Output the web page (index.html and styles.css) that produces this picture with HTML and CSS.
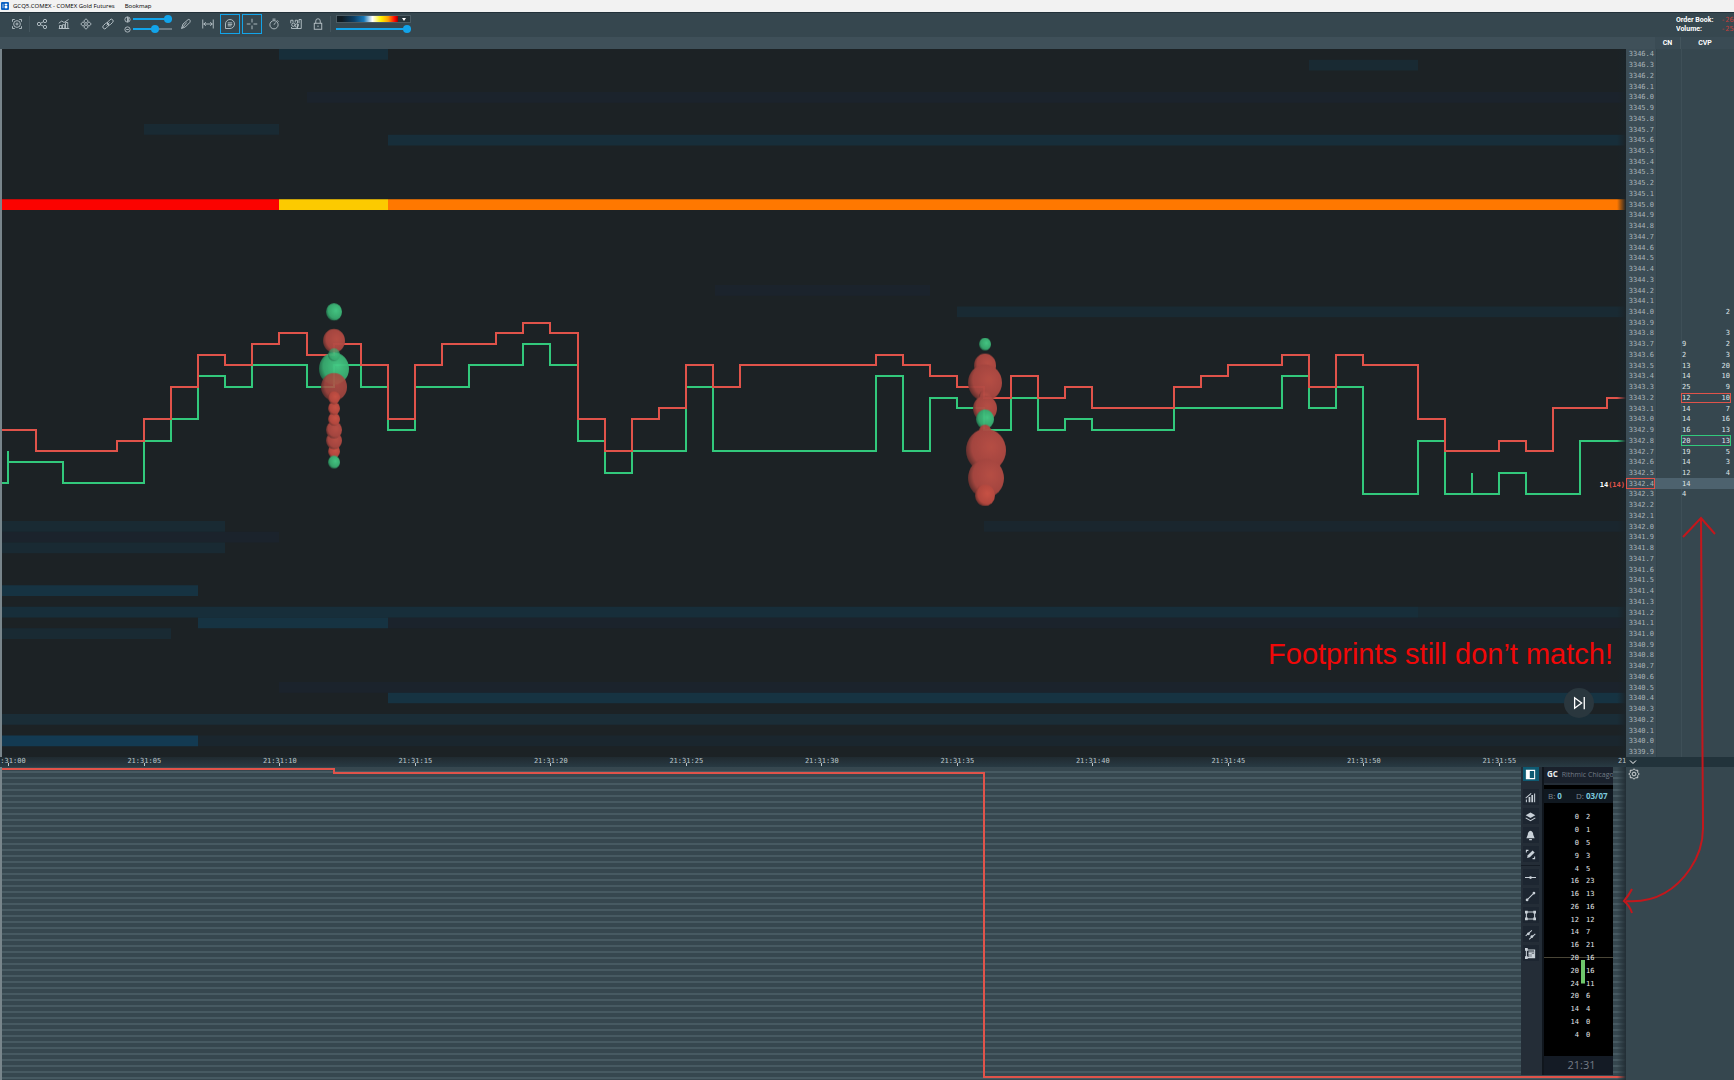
FILE: index.html
```html
<!DOCTYPE html>
<html lang="en">
<head>
<meta charset="utf-8">
<title>GCQ5.COMEX - COMEX Gold Futures</title>
<link rel="stylesheet" href="styles.css">
</head>
<body>
<header class="titlebar">
  <svg class="app-icon" viewBox="0 0 8 8"><rect width="8" height="8" rx="1" fill="#0b62c4"/><path d="M2 2v4M4 2h2v1H4zM4 4h2v2H4z" stroke="#fff" fill="#fff" stroke-width=".6"/></svg>
  <span class="title">GCQ5.COMEX - COMEX Gold Futures</span>
  <span>Bookmap</span>
</header>

<div class="toolbar">
  <button class="tool" aria-label="Fit view"><svg viewBox="0 0 16 16"><path d="M2 5V2h3M11 2h3v3M14 11v3h-3M5 14H2v-3M8 6v4M6 8h4"/><circle cx="8" cy="8" r="4.5"/></svg></button>
  <i class="sep"></i>
  <button class="tool" aria-label="Share"><svg viewBox="0 0 16 16"><circle cx="4" cy="8" r="2.2"/><circle cx="12" cy="4" r="2.2"/><circle cx="12" cy="12" r="2.2"/><path d="M6 7l4-2M6 9l4 2"/></svg></button>
  <button class="tool" aria-label="Indicators"><svg viewBox="0 0 16 16"><path d="M1 7l4-3 3 2 6-4M2 14v-4h3v4zM6 14V9h3v5zM10 14V6h3v8zM1 14h14"/></svg></button>
  <button class="tool" aria-label="Move"><svg viewBox="0 0 16 16"><path d="M8 1l3 3-3 3-3-3zM8 9l3 3-3 3-3-3zM4 5l3 3-3 3-3-3zM12 5l3 3-3 3-3-3z"/></svg></button>
  <button class="tool" aria-label="Link charts"><svg viewBox="0 0 16 16"><rect x="6.500" y="3" width="9" height="5" rx="2.500" transform="rotate(-45 11 5.500)"/><rect x=".5" y="8" width="9" height="5" rx="2.500" transform="rotate(-45 5 10.500)"/><path d="M6 10l4-4"/></svg></button>
  <div class="levels">
    <label><svg viewBox="0 0 8 8"><circle cx="4" cy="4" r="3"/><path d="M4 1v6M5 2v4" /></svg><input type="range" class="range full" value="100" aria-label="Contrast"></label>
    <label><svg viewBox="0 0 8 8"><circle cx="4" cy="4" r="3"/><path d="M2.500 4h3"/></svg><input type="range" class="range mid" value="59" aria-label="Bubble size"></label>
  </div>
  <button class="tool" aria-label="Draw"><svg viewBox="0 0 16 16"><path d="M2 14l2-6 7-6q4 0 2 4l-6 6-5 2M3 13l6-7"/></svg></button>
  <button class="tool" aria-label="Measure"><svg viewBox="0 0 16 16"><path d="M1 2v12M15 2v12M2 8h12M5 5.500L2.500 8 5 10.500M11 5.500L13.500 8 11 10.500"/></svg></button>
  <button class="tool on" aria-label="Comments"><svg viewBox="0 0 16 16"><path d="M2 14V8a6 6 0 1 1 6 6zM5 6.500h6M5 8.500h6M5 10.500h5"/></svg></button>
  <button class="tool on" aria-label="Crosshair"><svg viewBox="0 0 16 16"><path d="M8 1v5M8 10v5M1 8h5M10 8h5"/></svg></button>
  <button class="tool" aria-label="Timer"><svg viewBox="0 0 16 16"><circle cx="8" cy="9" r="5.500"/><path d="M8 9l2-3M6 1.500h4M12 3l2 2"/></svg></button>
  <button class="tool" aria-label="Statistics"><svg viewBox="0 0 16 16"><path d="M1 7V3h3v3M7 6V3h3v4M12 7V2h3v12H2v-2M10 14V9h2"/><circle cx="4.500" cy="9" r="2.200"/><circle cx="9" cy="10" r="2.200"/></svg></button>
  <button class="tool" aria-label="Lock"><svg viewBox="0 0 16 16"><rect x="3" y="7" width="10" height="8"/><path d="M5 7V4a3 3 0 0 1 6 0v3M8 10v2"/></svg></button>
  <i class="sep"></i>
  <div class="palette">
    <button class="swatch" aria-label="Heatmap colours"><i class="ramp"></i><svg class="caret" viewBox="0 0 12 6"><path d="M4 2h4L6 5z"/></svg></button>
    <input type="range" class="range full" value="100" aria-label="Heatmap limit">
  </div>
  <dl class="balance">
    <dt>Order Book:</dt><dd>-26%</dd>
    <dt>Volume:</dt><dd>-25%</dd>
  </dl>
</div>

<div class="columns-head"><span></span><span class="cn">CN</span><span class="cvp">CVP</span></div>

<main class="workspace">
  <section class="heatmap">
    <svg class="plot" viewBox="2 0 1624 660" preserveAspectRatio="none">
      <defs>
        <radialGradient id="red" cx=".62" cy=".42" r=".68"><stop offset="0" stop-color="#bd5147"/><stop offset=".7" stop-color="#aa4841"/><stop offset="1" stop-color="#522b2a"/></radialGradient>
        <radialGradient id="hot" cx=".62" cy=".42" r=".68"><stop offset="0" stop-color="#cf5446"/><stop offset=".7" stop-color="#b94a40"/><stop offset="1" stop-color="#5b2c29"/></radialGradient>
        <radialGradient id="green" cx=".62" cy=".42" r=".68"><stop offset="0" stop-color="#46cc87"/><stop offset=".7" stop-color="#38aa6f"/><stop offset="1" stop-color="#1d5a40"/></radialGradient>
      </defs>
      <!-- resting liquidity, one band per tick -->
      <g fill="#1b232c">
        <path d="M307 40h1319v10H307zM715 220h215v10H715zM0 450h279v10H0zM388 530h1238v10H388zM279 590h1347v10H279z"/>
      </g>
      <g fill="#192a33">
        <path d="M1309 10h109v10h-109zM144 70h135v10H144zM957 240h669v10H957zM0 440h225v10H0zM0 460h225v10H0zM1418 520h208v10h-208zM0 540h171v10H0z"/>
      </g>
      <path fill="#1a262e" d="M984 440h642v10H984zM198 640h1428v10H198z"/>
      <path fill="#1a2d37" d="M0 620h1626v10H0z"/>
      <path fill="#172e3a" d="M279 0h109v10H279zM388 80h1238v10H388zM0 520h1418v10H0z"/>
      <path fill="#163342" d="M0 500h198v10H0zM198 530h190v10H198zM388 600h1238v10H388z"/>
      <path fill="#133a52" d="M0 640h198v10H0z"/>
      <path fill="#fb0300" d="M0 140h279v10H0z"/>
      <path fill="#fcca00" d="M279 140h109v10H279z"/>
      <path fill="#ff7800" d="M388 140h1238v10H388z"/>
      <!-- best bid -->
      <path class="line bid" d="M0 405H8V375V385H63V405H144V365H171V345H198V305H225V315H252V295H307V315H334V295H361V315H388V355H415V315H469V295H523V275H550V295H578V365H605V395H632V375H686V315H713V375H876V305H903V375H930V325H957V335H984V355H1011V325H1038V355H1065V345H1092V355H1174V335H1282V305H1309V335H1336V315H1363V415H1418V365H1445V415H1472V395V415H1499V395H1526V415H1580V365H1626"/>
      <!-- best ask -->
      <path class="line ask" d="M0 355H36V375H117V365H144V345H171V315H198V285H225V295H252V275H279V265H307V285H334V275H361V295H388V345H415V295H442V275H496V265H523V255H550V265H578V345H605V375H632V345H659V335H686V295H713V315H740V295H876V285H903V295H930V305H957V315H984V325H1011V305H1038V325H1065V315H1092V335H1174V315H1201V305H1228V295H1282V285H1309V315H1336V285H1363V295H1418V345H1445V375H1499V365H1526V375H1553V335H1607V325H1626"/>
      <!-- traded volume bubbles -->
      <g opacity=".96">
        <circle cx="334" cy="245" r="8" fill="url(#green)"/>
        <circle cx="334" cy="272" r="11" fill="url(#red)"/>
        <circle cx="334" cy="298" r="15" fill="url(#green)"/>
        <circle cx="334" cy="285" r="6" fill="url(#green)" opacity=".7"/>
        <circle cx="334" cy="315" r="13" fill="url(#red)" opacity=".9"/>
        <circle cx="334" cy="375" r="6" fill="url(#hot)"/>
        <circle cx="334" cy="365" r="8" fill="url(#red)"/>
        <circle cx="334" cy="355" r="8" fill="url(#red)"/>
        <circle cx="334" cy="345" r="6" fill="url(#hot)"/>
        <circle cx="334" cy="335" r="6" fill="url(#hot)"/>
        <circle cx="334" cy="325" r="6" fill="url(#hot)"/>
        <circle cx="334" cy="385" r="6" fill="url(#green)"/>
        <circle cx="985" cy="275" r="6" fill="url(#green)"/>
        <circle cx="985" cy="295" r="11" fill="url(#red)"/>
        <circle cx="985" cy="311" r="17" fill="url(#red)"/>
        <circle cx="985" cy="324" r="6" fill="url(#red)"/>
        <circle cx="985" cy="335" r="12" fill="url(#red)"/>
        <circle cx="985" cy="345" r="9" fill="url(#green)"/>
        <circle cx="985" cy="356" r="6" fill="url(#red)"/>
        <circle cx="986" cy="374" r="20" fill="url(#red)"/>
        <circle cx="986" cy="400" r="18" fill="url(#red)"/>
        <circle cx="985" cy="416" r="10" fill="url(#hot)"/>
      </g>
    </svg>
    <div class="edge-fade"></div>
    <p class="last-size">14<b>(14)</b></p>
    <p class="note">Footprints still don’t match!</p>
    <button class="jump" aria-label="Jump to latest"><svg viewBox="0 0 16 16"><path d="M3 2v12l8-6zM14 1v14"/></svg></button>
  </section>

  <table class="ladder" aria-label="Price ladder"><tbody>
    <tr><th>3346.4</th></tr><tr><th>3346.3</th></tr><tr><th>3346.2</th></tr><tr><th>3346.1</th></tr><tr><th>3346.0</th></tr>
    <tr><th>3345.9</th></tr><tr><th>3345.8</th></tr><tr><th>3345.7</th></tr><tr><th>3345.6</th></tr><tr><th>3345.5</th></tr>
    <tr><th>3345.4</th></tr><tr><th>3345.3</th></tr><tr><th>3345.2</th></tr><tr><th>3345.1</th></tr><tr><th>3345.0</th></tr>
    <tr><th>3344.9</th></tr><tr><th>3344.8</th></tr><tr><th>3344.7</th></tr><tr><th>3344.6</th></tr><tr><th>3344.5</th></tr>
    <tr><th>3344.4</th></tr><tr><th>3344.3</th></tr><tr><th>3344.2</th></tr><tr><th>3344.1</th></tr>
    <tr><th>3344.0</th><td></td><td>2</td></tr>
    <tr><th>3343.9</th></tr>
    <tr><th>3343.8</th><td></td><td>3</td></tr>
    <tr><th>3343.7</th><td>9</td><td>2</td></tr>
    <tr><th>3343.6</th><td>2</td><td>3</td></tr>
    <tr><th>3343.5</th><td>13</td><td>20</td></tr>
    <tr><th>3343.4</th><td>14</td><td>10</td></tr>
    <tr><th>3343.3</th><td>25</td><td>9</td></tr>
    <tr class="best-ask"><th>3343.2</th><td>12</td><td>10</td></tr>
    <tr><th>3343.1</th><td>14</td><td>7</td></tr>
    <tr><th>3343.0</th><td>14</td><td>16</td></tr>
    <tr><th>3342.9</th><td>16</td><td>13</td></tr>
    <tr class="best-bid"><th>3342.8</th><td>20</td><td>13</td></tr>
    <tr><th>3342.7</th><td>19</td><td>5</td></tr>
    <tr><th>3342.6</th><td>14</td><td>3</td></tr>
    <tr><th>3342.5</th><td>12</td><td>4</td></tr>
    <tr class="cursor"><th>3342.4</th><td>14</td><td></td></tr>
    <tr><th>3342.3</th><td>4</td><td></td></tr>
    <tr><th>3342.2</th></tr><tr><th>3342.1</th></tr><tr><th>3342.0</th></tr>
    <tr><th>3341.9</th></tr><tr><th>3341.8</th></tr><tr><th>3341.7</th></tr><tr><th>3341.6</th></tr><tr><th>3341.5</th></tr>
    <tr><th>3341.4</th></tr><tr><th>3341.3</th></tr><tr><th>3341.2</th></tr><tr><th>3341.1</th></tr><tr><th>3341.0</th></tr>
    <tr><th>3340.9</th></tr><tr><th>3340.8</th></tr><tr><th>3340.7</th></tr><tr><th>3340.6</th></tr><tr><th>3340.5</th></tr>
    <tr><th>3340.4</th></tr><tr><th>3340.3</th></tr><tr><th>3340.2</th></tr><tr><th>3340.1</th></tr><tr><th>3340.0</th></tr>
    <tr><th>3339.9</th></tr>
  </tbody></table>

  <div class="time-axis"><div class="ticks">
    <span>21:31:00</span><span>21:31:05</span><span>21:31:10</span><span>21:31:15</span><span>21:31:20</span><span>21:31:25</span><span>21:31:30</span><span>21:31:35</span><span>21:31:40</span><span>21:31:45</span><span>21:31:50</span><span>21:31:55</span><span>21:32:00</span>
  </div></div>
  <button class="collapse" aria-label="Collapse indicator pane"><svg viewBox="0 0 8 8"><path d="M1 2.500l3 3 3-3"/></svg></button>

  <section class="indicator">
    <svg class="plot" viewBox="2 0 1624 313" preserveAspectRatio="none"><path class="line cvd" d="M0 2H334V6H984V310H1626"/></svg>
    <div class="edge-fade soft"></div>
    <aside class="footprint">
      <nav class="rail">
        <button class="on" aria-label="Panels"><svg viewBox="0 0 16 16"><path d="M2 2h12v12H2z"/><path class="solid" d="M2 2h5v12H2z"/></svg></button>
        <button class="first" aria-label="Bars"><svg viewBox="0 0 16 16"><path d="M2 15v-4M6 15V8h1v7M10 15V5h1v10M14 15V2M1 9l8-7"/></svg></button>
        <button aria-label="Layers"><svg viewBox="0 0 16 16"><path class="solid" d="M8 2l7 4-7 4-7-4z"/><path d="M1 10l7 4 7-4"/></svg></button>
        <button aria-label="Alerts"><svg viewBox="0 0 16 16"><path class="solid" d="M8 1q4 1 4 6l2 5H2l2-5q0-5 4-6zM6 13h4v2H6z"/></svg></button>
        <button aria-label="Drawing tools"><svg viewBox="0 0 16 16"><path d="M2 5V2h3M14 11v3h-3"/><path class="solid" d="M3 13l1-4 7-7 3 3-7 7z"/></svg></button>
        <hr>
        <button aria-label="Horizontal line"><svg viewBox="0 0 16 16"><path d="M0 8h16"/><circle class="solid" cx="8" cy="8" r="2"/></svg></button>
        <button aria-label="Trend line"><svg viewBox="0 0 16 16"><path d="M3 13L13 3"/><circle class="solid" cx="3" cy="13" r="2"/><circle class="solid" cx="13" cy="3" r="2"/></svg></button>
        <button aria-label="Rectangle"><svg viewBox="0 0 16 16"><path d="M2 3h12v10H2z"/><path class="solid" d="M0 1h4v4H0zM12 1h4v4h-4zM0 11h4v4H0zM12 11h4v4h-4z"/></svg></button>
        <button aria-label="Channel"><svg viewBox="0 0 16 16"><path d="M1 10l9-8M6 15l9-8"/><circle class="solid" cx="5" cy="7" r="2"/><circle class="solid" cx="10" cy="11" r="2"/></svg></button>
        <button aria-label="Volume profile"><svg viewBox="0 0 16 16"><path d="M2 2v12h12V3H2M5 6h8M5 8h5M5 10h8M5 12h6"/><path class="solid" d="M0 0h4v4H0zM0 12h4v4H0zM10 8h4v6h-4z"/></svg></button>
      </nav>
      <div class="book">
        <div class="book-head"><b>GC</b> <span>Rithmic Chicago (</span></div>
        <div class="book-body">
          <div class="book-date">B: <b>0</b><span>D: <b>03/07</b></span></div>
          <table class="cells" aria-label="Footprint, bid by ask"><tbody>
            <tr><td>0</td><td>2</td></tr><tr><td>0</td><td>1</td></tr><tr><td>0</td><td>5</td></tr>
            <tr><td>9</td><td>3</td></tr><tr><td>4</td><td>5</td></tr><tr><td>16</td><td>23</td></tr>
            <tr><td>16</td><td>13</td></tr><tr><td>26</td><td>16</td></tr><tr><td>12</td><td>12</td></tr>
            <tr><td>14</td><td>7</td></tr><tr><td>16</td><td>21</td></tr>
            <tr class="open"><td>20</td><td>16</td></tr><tr class="candle"><td>20</td><td>16</td></tr><tr class="candle end"><td>24</td><td>11</td></tr>
            <tr><td>20</td><td>6</td></tr><tr><td>14</td><td>4</td></tr><tr><td>14</td><td>0</td></tr><tr><td>4</td><td>0</td></tr>
          </tbody></table>
        </div>
        <div class="book-time">21:31</div>
      </div>
    </aside>
  </section>
  <div class="pane-settings"><button aria-label="Pane settings"><svg viewBox="0 0 16 16"><path d="M8 1l2 2h3v3l2 2-2 2v3h-3l-2 2-2-2H3v-3L1 8l2-2V3h3z"/><circle cx="8" cy="8" r="2.500"/></svg></button></div>
</main>

<svg class="annotation" viewBox="0 0 1734 1080" preserveAspectRatio="none" aria-hidden="true"><path d="M1683 537L1701 518 1715 534M1701 518L1703 828Q1703 850 1690 869Q1666 904 1626 901M1632 889Q1629 895 1624 901Q1630 906 1632 913"/></svg>
</body>
</html>
```
FILE: styles.css
```css
:root {
  --slate: #36474f;
  --night: #1c2225;
  --blue: #12a4ea;
  --red: #e0534a;
  --green: #32c97c;
  --mono: "DejaVu Sans Mono", monospace;
}
* { box-sizing: border-box; }
body {
  margin: 0;
  min-height: 100vh;
  display: flex;
  flex-direction: column;
  position: relative;
  overflow: hidden;
  background: var(--slate);
  color: #fff;
  font: 7px/8px Roboto, sans-serif;
}
p, dl, dd, table { margin: 0; }
button { padding: 0; border: 0; background: none; color: inherit; font: inherit; display: grid; place-items: center; }
svg { display: block; fill: none; stroke: currentColor; }

.titlebar {
  display: flex;
  align-items: center;
  gap: 4px;
  height: 12px;
  padding: 0 1px;
  background: #f2f2f2;
  color: #000;
  font: 6px/10px "Open Sans", sans-serif;
}
.title { margin-right: 6px; }
.app-icon { width: 8px; height: 8px; stroke: none; }

.toolbar {
  display: flex;
  align-items: center;
  gap: 2px;
  height: 25px;
  padding: 0 0 2px 7px;
  border-top: 1px solid #22313a;
  background: var(--slate);
}
.tool { width: 20px; height: 20px; color: #b9c4c9; }
.tool svg { width: 12px; height: 12px; stroke-width: 1.2; }
.tool.on { border: 1px solid var(--blue); }
.sep { width: 1px; height: 16px; background: #44555d; }
.levels { display: grid; gap: 2px; width: 54px; padding-left: 4px; }
.levels label { display: flex; align-items: center; gap: 2px; height: 8px; }
.levels svg { width: 7px; height: 7px; color: #b9c4c9; }
.range { appearance: none; width: 39px; height: 8px; margin: 0; background: none; }
.range::-webkit-slider-runnable-track { height: 2px; background: var(--blue); }
.range.mid::-webkit-slider-runnable-track { background: linear-gradient(90deg, var(--blue) 59%, #6c7a82 59%); }
.range::-webkit-slider-thumb { appearance: none; width: 8px; height: 8px; margin-top: -3px; border-radius: 50%; background: var(--blue); }
.palette { display: grid; gap: 2px; width: 75px; margin-left: 3px; }
.palette .range { width: 100%; }
.swatch { display: flex; width: 100%; height: 8px; border: 1px solid #4b5b63; align-items: stretch; }
.ramp { flex: 1; background: linear-gradient(90deg, #101b22 0 8%, #0b3f66 28%, #1678b8 44%, #fff 58%, #fff200 72%, #ffa000 84%, #f00 95%, #900); }
.caret { width: 12px; height: 6px; background: #26343b; fill: #fff; stroke: none; }
.balance {
  display: grid;
  grid-template-columns: 45px 13px;
  row-gap: 1px;
  margin-left: auto;
  overflow: hidden;
  font-weight: 700;
}
.balance dd { color: #c4403c; font-family: var(--mono); font-weight: 400; }

.columns-head {
  display: grid;
  grid-template-columns: 1fr 26px 53px;
  height: 12px;
  background: #3f5059;
  font-weight: 700;
  line-height: 12px;
  text-align: center;
}
.columns-head .cn, .columns-head .cvp { background: #3a4b54; }
.columns-head .cn { border-right: 1px solid #44555d; }
.columns-head .cvp { padding-right: 5px; }

.workspace {
  flex: 1;
  display: grid;
  grid-template-columns: minmax(0, 1fr) 108px;
  grid-template-rows: minmax(0, 708fr) 10px minmax(0, 313fr);
}
.heatmap, .indicator { position: relative; overflow: hidden; border-left: 2px solid #78858b; }
.heatmap { background: var(--night); }
.plot { position: absolute; left: 0; top: 0; width: 100%; height: 100%; }
.plot path, .plot circle { stroke: none; }
.plot .line { fill: none; stroke-width: 2px; vector-effect: non-scaling-stroke; shape-rendering: crispEdges; }
.plot .bid { stroke: var(--green); }
.plot .ask, .plot .cvd { stroke: var(--red); }
.edge-fade { position: absolute; inset: 0 0 0 auto; width: 9px; background: linear-gradient(90deg, transparent, #1a2328); }
.edge-fade.soft { background: linear-gradient(90deg, transparent, #222e35); }
.last-size { position: absolute; right: 1px; top: 61%; font: 700 7px/8px var(--mono); }
.last-size b { color: var(--red); }
.note { position: absolute; right: 13px; top: 83%; font: 29px/34px "Liberation Sans", Arial, sans-serif; color: #f00808; }
.jump { position: absolute; right: 32px; bottom: 39px; width: 30px; height: 30px; border-radius: 50%; background: #2a373e; }
.jump svg { width: 14px; height: 14px; stroke-width: 1.5; }

.ladder { display: flex; min-height: 0; background: linear-gradient(90deg, #3c4d56 30px, #33434b 30px 31px, transparent 31px 55px, #3e4f57 55px 56px, transparent 56px); font: 7px/8px var(--mono); }
.ladder tbody { flex: 1; display: flex; flex-direction: column; }
.ladder tr { flex: 1; display: grid; grid-template-columns: 29px 26px 18px 32px 3px; align-items: stretch; min-height: 0; }
.ladder th, .ladder td { display: flex; align-items: center; padding: 0; }
.ladder th { justify-content: flex-end; font-weight: 400; color: #a9b4b9; border: 1px solid transparent; }
.ladder td { grid-column: 3; border: 1px solid transparent; border-right: 0; color: #dfe5e8; }
.ladder td + td { grid-column: 4; justify-content: flex-end; border: 1px solid transparent; border-left: 0; }
.ladder .best-ask td { border-color: var(--red); }
.ladder .best-bid td { border-color: var(--green); background: #3d4756; }
.ladder .cursor { background: #4d626e; }
.ladder .cursor th { border-color: var(--red); background: #3c4d56; }

.time-axis { overflow: hidden; background: linear-gradient(#202a30, #283a43); }
.ticks { display: grid; grid-template-columns: repeat(13, 1fr); width: calc(100% * 13 / 12); margin-left: -59px; font: 7px/8px var(--mono); color: #bcc6ca; text-align: center; }
.ticks span { padding-bottom: 1px; background: linear-gradient(#bcc6ca, #bcc6ca) center bottom / 1px 3px no-repeat; }
.collapse { justify-content: start; padding-left: 3px; background: #22333b; }
.collapse svg { width: 8px; height: 8px; }

.indicator { display: flex; justify-content: flex-end; padding: 0 13px 5px 0; background: repeating-linear-gradient(#36474f 0 4px, #475a62 4px 6px); }
.footprint { position: relative; display: flex; width: 92px; background: #242d37; }
.rail { flex: 0 0 21px; display: flex; flex-direction: column; align-items: center; gap: 3px; padding-right: 2px; color: #c9d1d8; }
.rail button { width: 16px; height: 16px; background: #1d2631; }
.rail .on { height: 14px; background: #0e5a72; color: #fff; }
.rail .first { margin-top: 5px; }
.rail svg { width: 11px; height: 11px; stroke-width: 1.5; }
.rail .solid { fill: currentColor; stroke: none; }
.rail hr { width: 100%; height: 1px; margin: 0; border: 0; background: #151c25; }
.book { flex: 1; min-width: 0; display: flex; flex-direction: column; overflow: hidden; border-left: 2px solid #10161d; white-space: nowrap; font: 7px/8px "Open Sans", sans-serif; }
.book-head { height: 16px; padding: 3px 0 2px 3px; background: #1a212c; color: #727b85; }
.book-head b { color: #e8ecef; margin-right: 2px; font-size: 8px; }
.book-body { flex: 1; display: flex; flex-direction: column; padding: 4px 0 15px; border-top: 2px solid #242d37; background: #000; }
.book-date { height: 14px; padding: 3px 0 3px 4px; background: #101820; color: #7c8790; font-size: 8px; }
.book-date span { margin-left: 14px; }
.book-date b { color: #7cc8dd; }
.cells { flex: 1; display: flex; margin-top: 8px; }
.cells tbody { flex: 1; display: flex; flex-direction: column; }
.cells tr { flex: 1; display: grid; grid-template-columns: 35px 1fr; column-gap: 7px; align-items: center; background: no-repeat 37px 0 / 4px 100%; }
.cells td { padding: 0; font: 7px/8px "DejaVu Sans Mono", monospace; color: #e3e6e8; }
.cells td:first-child { text-align: right; }
.cells .open { background-image: linear-gradient(#6fc76b, #6fc76b), linear-gradient(#4a4637, #4a4637); background-position: 37px 100%, center; background-size: 4px 35%, 100% 1px; }
.cells .candle { background-image: linear-gradient(#6fc76b, #6fc76b); }
.cells .end { background-size: 4px 50%; }
.book-time { height: 19px; background: #141b25; color: #747c85; font-size: 11px; line-height: 18px; text-align: center; padding-left: 6px; }
.pane-settings { padding: 1px 0 0 2px; }
.pane-settings svg { width: 12px; height: 12px; }
.annotation { position: absolute; inset: 0; width: 100%; height: 100%; pointer-events: none; stroke: #c4171c; stroke-width: 2; }
```
